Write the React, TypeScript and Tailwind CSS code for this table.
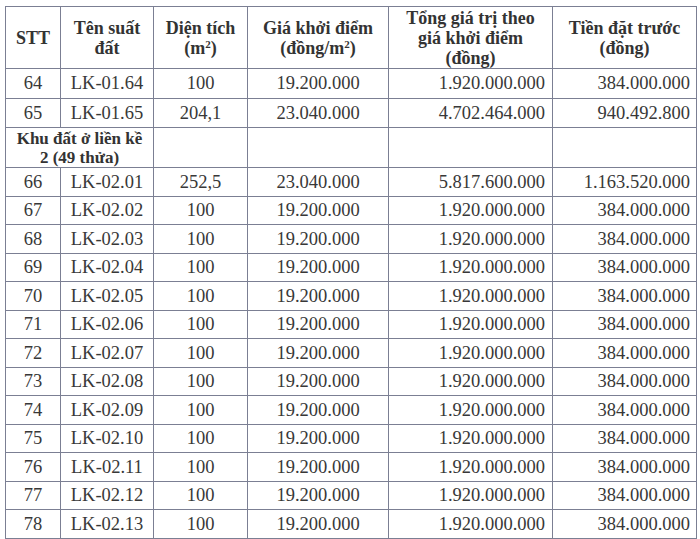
import React from 'react';

type Row = {
  stt: string;
  code: string;
  area: string;
  price: string;
  total: string;
  deposit: string;
};

const rows: Row[] = [
  { stt: '66', code: 'LK-02.01', area: '252,5', price: '23.040.000', total: '5.817.600.000', deposit: '1.163.520.000' },
  ...Array.from({ length: 12 }, (_, i) => ({
    stt: String(67 + i),
    code: `LK-02.${String(i + 2).padStart(2, '0')}`,
    area: '100',
    price: '19.200.000',
    total: '1.920.000.000',
    deposit: '384.000.000',
  })),
];

const cell = 'border border-[#7b7f93] p-0 align-middle';

const DataRow: React.FC<{ row: Row; h: string }> = ({ row, h }) => (
  <tr className={h}>
    <td className={`${cell} text-center`}>{row.stt}</td>
    <td className={`${cell} text-center`}>{row.code}</td>
    <td className={`${cell} text-center`}>{row.area}</td>
    <td className={`${cell} text-center`}>{row.price}</td>
    <td className={`${cell} text-right pr-[7px]`}>{row.total}</td>
    <td className={`${cell} text-right pr-[6px]`}>{row.deposit}</td>
  </tr>
);

export default function App() {
  return (
    <div className="w-[700px] h-[539px] overflow-hidden bg-white pt-[6px] pl-[5px] font-['Liberation_Serif','Times_New_Roman',serif]">
      <table className="border-collapse table-fixed w-[691px] text-[18.5px] leading-none text-[#383838] font-['Liberation_Serif','Times_New_Roman',serif]">
        <colgroup>
          <col className="w-[55px]" />
          <col className="w-[93px]" />
          <col className="w-[94px]" />
          <col className="w-[141px]" />
          <col className="w-[164px]" />
          <col className="w-[144px]" />
        </colgroup>
        <thead>
          <tr className="h-[62px] font-bold text-[18px] leading-[20px] text-[#333]">
            <th className={`${cell} text-center`}>STT</th>
            <th className={`${cell} text-center`}>Tên suất<br />đất</th>
            <th className={`${cell} text-center`}>
              Diện tích<br />(m<sup className="text-[11px]">2</sup>)
            </th>
            <th className={`${cell} text-center`}>
              Giá khởi điểm<br />(đồng/m<sup className="text-[11px]">2</sup>)
            </th>
            <th className={`${cell} text-center`}>
              Tổng giá trị theo<br />giá khởi điểm<br />(đồng)
            </th>
            <th className={`${cell} text-center`}>Tiền đặt trước<br />(đồng)</th>
          </tr>
        </thead>
        <tbody>
          <DataRow h="h-[30px]" row={{ stt: '64', code: 'LK-01.64', area: '100', price: '19.200.000', total: '1.920.000.000', deposit: '384.000.000' }} />
          <DataRow h="h-[29px]" row={{ stt: '65', code: 'LK-01.65', area: '204,1', price: '23.040.000', total: '4.702.464.000', deposit: '940.492.800' }} />
          <tr className="h-[40px]">
            <td colSpan={2} className={`${cell} text-center font-bold text-[17px] leading-[19px] text-[#333]`}>
              Khu đất ở liền kề<br />2 (49 thửa)
            </td>
            <td className={cell}></td>
            <td className={cell}></td>
            <td className={cell}></td>
            <td className={cell}></td>
          </tr>
          {rows.map(r => (
            <DataRow key={r.stt} h="h-[28.5px]" row={r} />
          ))}
          <tr className="h-[20px]">
            <td className={cell}></td>
            <td className={cell}></td>
            <td className={cell}></td>
            <td className={cell}></td>
            <td className={cell}></td>
            <td className={cell}></td>
          </tr>
        </tbody>
      </table>
    </div>
  );
}
